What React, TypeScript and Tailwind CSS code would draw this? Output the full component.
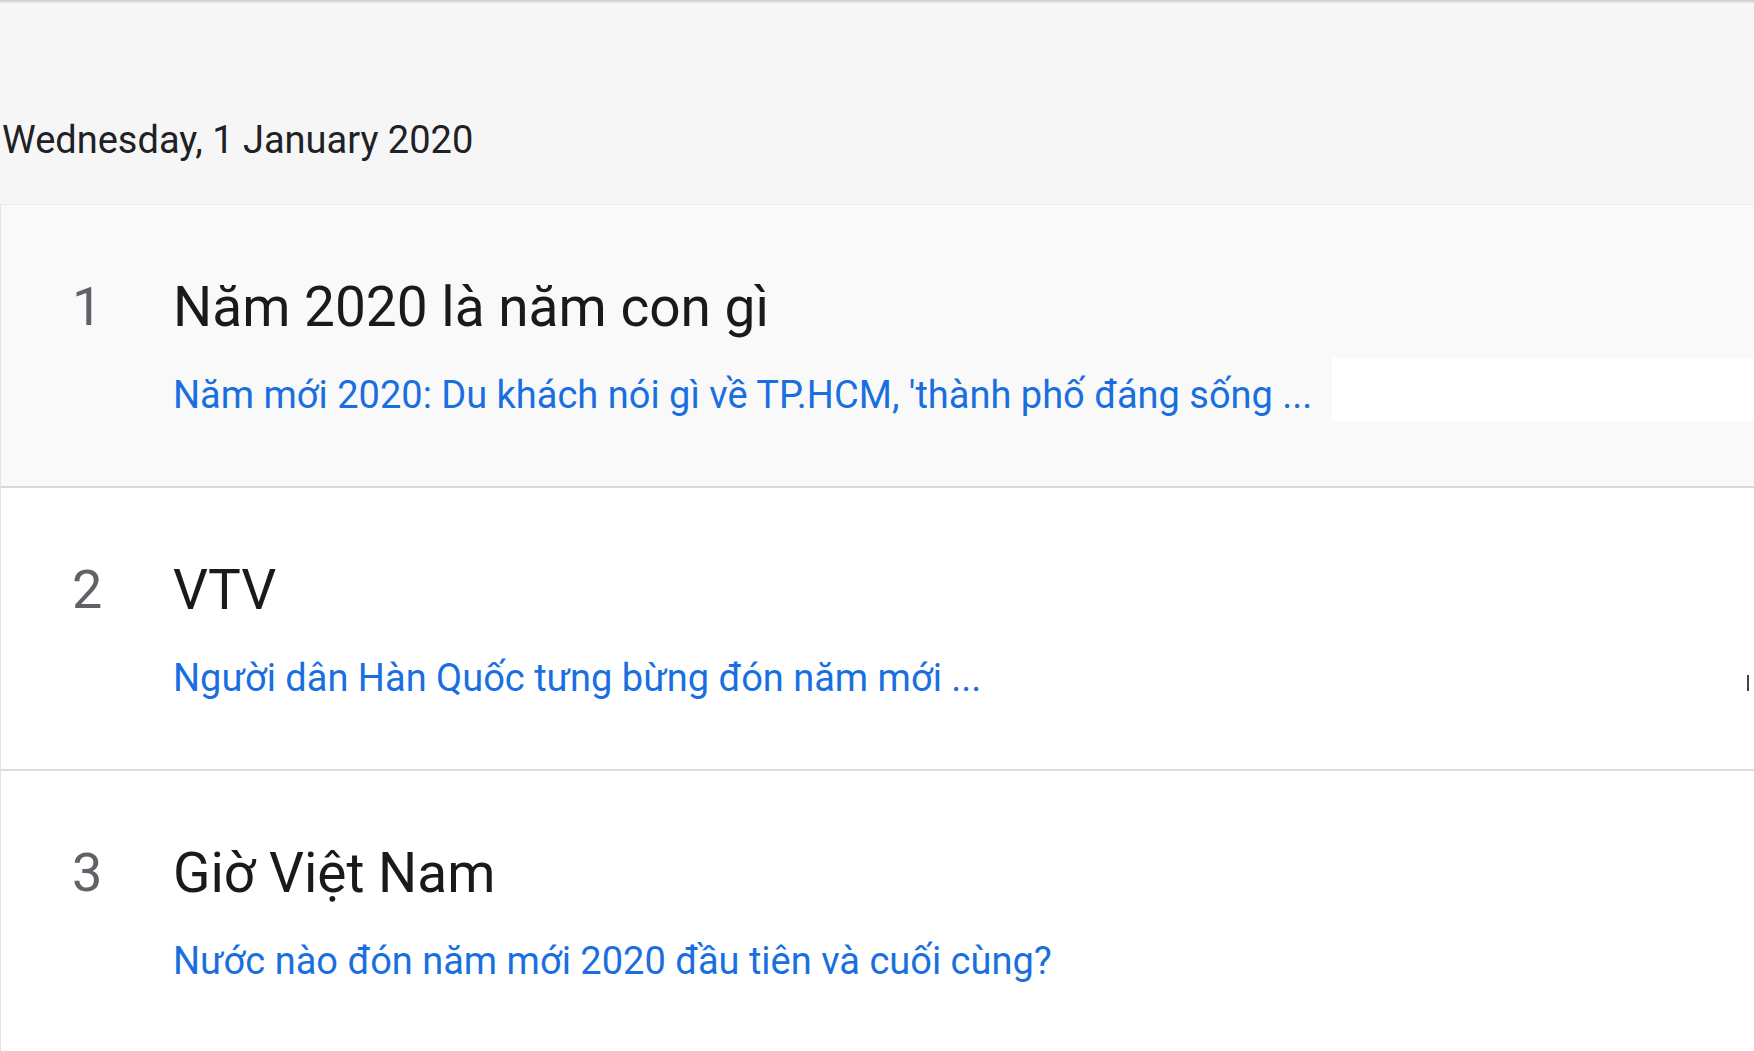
import React from "react";

type Trend = {
  rank: number;
  title: string;
  article: string;
};

const trends: Trend[] = [
  {
    rank: 1,
    title: "Năm 2020 là năm con gì",
    article: "Năm mới 2020: Du khách nói gì về TP.HCM, 'thành phố đáng sống ...",
  },
  {
    rank: 2,
    title: "VTV",
    article: "Người dân Hàn Quốc tưng bừng đón năm mới ...",
  },
  {
    rank: 3,
    title: "Giờ Việt Nam",
    article: "Nước nào đón năm mới 2020 đầu tiên và cuối cùng?",
  },
];

const TrendCard = ({ item }: { item: Trend }) => {
  const first = item.rank === 1;
  const second = item.rank === 2;
  return (
    <div
      className={
        first
          ? "flex bg-[#f9f9f9] border-t border-b-2 border-l border-t-[#ececec] border-b-[#d9d9d9] border-l-[#e2e2e2] h-[284px]"
          : "flex bg-white border-b-2 border-l border-b-[#dcdcdc] border-l-[#e2e2e2] h-[283px]"
      }
    >
      <div className="w-[172px] shrink-0 pl-[71px] pt-[70px] text-[54px] leading-[64px] text-[#5f6368]">
        {item.rank}
      </div>
      <div className="flex-1 flex flex-col pt-[70px]">
        <div className="text-[55px] leading-[64px] text-[#1a1a1a] whitespace-nowrap">
          {item.title}
        </div>
        <div className="mt-[19px] h-[63px] flex">
          <span className="pt-[13px] text-[38px] leading-[48px] text-[#1a6fe0] whitespace-nowrap">
            {item.article}
          </span>
          {first && <div className="flex-1 ml-[20px] bg-white" />}
          {second && (
            <div className="flex-1 flex justify-end items-center pt-[20px] pr-[5px]">
              <div className="w-[2px] h-[16px] bg-[#444]" />
            </div>
          )}
        </div>
      </div>
    </div>
  );
};

const App = () => {
  return (
    <div
      className="min-h-screen w-full bg-[#f6f6f6] overflow-hidden"
      style={{ fontFamily: "Roboto, 'Noto Sans', Arial, sans-serif" }}
    >
      <div className="h-[3px] bg-gradient-to-b from-[#c9c9c9] to-[#ededed]" />
      <div className="pt-[113px] pl-[2px] text-[38px] leading-[48px] text-[#202124]">
        Wednesday, 1 January 2020
      </div>
      <div className="mt-[40px] flex flex-col">
        {trends.map((t) => (
          <TrendCard key={t.rank} item={t} />
        ))}
      </div>
    </div>
  );
};

export default App;
